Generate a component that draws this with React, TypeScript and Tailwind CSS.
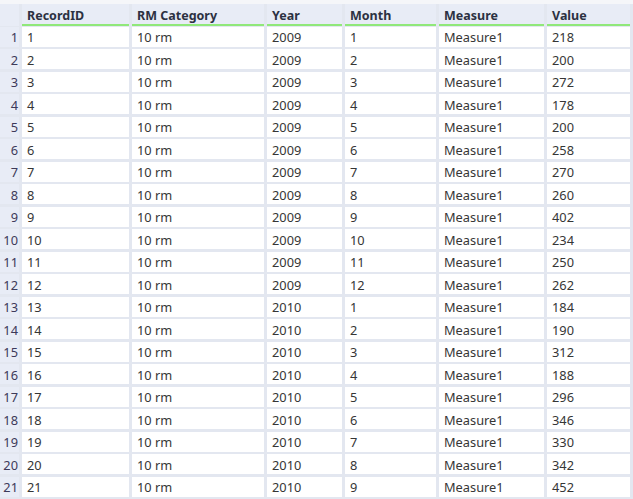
import React from "react";

const rows: [number, number, number, number][] = [
  [1, 2009, 1, 218],
  [2, 2009, 2, 200],
  [3, 2009, 3, 272],
  [4, 2009, 4, 178],
  [5, 2009, 5, 200],
  [6, 2009, 6, 258],
  [7, 2009, 7, 270],
  [8, 2009, 8, 260],
  [9, 2009, 9, 402],
  [10, 2009, 10, 234],
  [11, 2009, 11, 250],
  [12, 2009, 12, 262],
  [13, 2010, 1, 184],
  [14, 2010, 2, 190],
  [15, 2010, 3, 312],
  [16, 2010, 4, 188],
  [17, 2010, 5, 296],
  [18, 2010, 6, 346],
  [19, 2010, 7, 330],
  [20, 2010, 8, 342],
  [21, 2010, 9, 452],
];

const headers = ["RecordID", "RM Category", "Year", "Month", "Measure", "Value"];

const cell = "bg-white flex items-center pl-[5px] pt-[2px] text-[12.8px] text-[#363636] leading-none";

export default function App() {
  return (
    <div
      className="w-[633px] h-[499px] overflow-hidden bg-[#e3e7f0]"
      style={{ fontFamily: '"Noto Sans", "Open Sans", Arial, sans-serif' }}
    >
      <div className="h-[4px] bg-[#f5f6f9]" />
      <div className="grid grid-cols-[19px_107px_132px_75px_91px_105px_83px] gap-x-[3px] gap-y-[2.5px] pr-[3px] auto-rows-[20px]">
        <div className="h-[22px] bg-[#e8ecf6]" />
        {headers.map((h) => (
          <div key={h} className="h-[22px] bg-[#e8ecf6] relative flex items-center pl-[5px] pt-[2px] text-[12.5px] font-bold text-[#2c3142]">
            {h}
            <div className="absolute left-0 right-0 bottom-[0px] h-[2px] bg-[#90e87a]" />
          </div>
        ))}
        {rows.map((r) => (
          <React.Fragment key={r[0]}>
            <div className="bg-[#e8ecf6] flex items-center justify-end pr-[1px] pt-[2px] text-[12.8px] text-[#3d3a5a] leading-none">
              {r[0]}
            </div>
            <div className={cell}>{r[0]}</div>
            <div className={cell}>10 rm</div>
            <div className={cell}>{r[1]}</div>
            <div className={cell}>{r[2]}</div>
            <div className={cell}>Measure1</div>
            <div className={cell}>{r[3]}</div>
          </React.Fragment>
        ))}
      </div>
    </div>
  );
}
